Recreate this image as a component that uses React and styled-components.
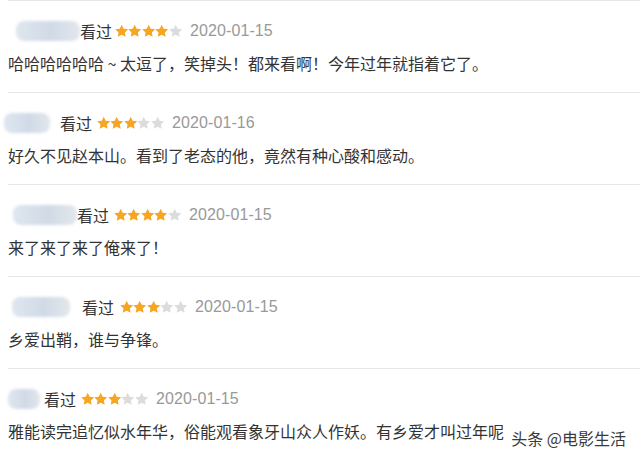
import React from 'react';
import styled, { createGlobalStyle } from 'styled-components';

const GlobalStyle = createGlobalStyle`
  html, body {
    margin: 0;
    padding: 0;
    background: #fff;
  }
  body {
    width: 640px;
    height: 453px;
    overflow: hidden;
    font-family: "Liberation Sans", "Noto Sans CJK SC", sans-serif;
  }
`;

const List = styled.div`
  position: relative;
  padding-left: 8px;
`;

const Item = styled.div`
  height: 92px;
  box-sizing: border-box;
  border-top: 1px solid #e6e6e6;
  padding-top: 18px;
`;

const Header = styled.div`
  display: flex;
  align-items: center;
  height: 24px;
  font-size: 16px;
  color: #333;
`;

const Name = styled.span`
  position: relative;
  display: inline-block;
  width: ${p => p.$w}px;
  height: 24px;
  margin-right: ${p => p.$gap}px;
`;

const Blob = styled.span`
  position: absolute;
  left: ${p => p.$x}px;
  top: 2px;
  width: ${p => p.$w}px;
  height: 20px;
  border-radius: 8px;
  background: linear-gradient(90deg, #dfe6ef 0%, #d0dae6 55%, #e3e7ec 100%);
  filter: blur(1.5px);
`;

const Watched = styled.span`
  font-family: "Noto Sans CJK SC", sans-serif;
  line-height: 24px;
  color: #333;
`;

const Stars = styled.span`
  display: inline-flex;
  margin-left: ${p => p.$gap}px;
`;

const DateText = styled.span`
  margin-left: 8px;
  color: #999;
  font-size: 16px;
  letter-spacing: 0.1px;
`;

const Comment = styled.div`
  margin-top: 8px;
  font-family: "Noto Sans CJK SC", sans-serif;
  font-size: 16px;
  line-height: 24px;
  color: #333;
  white-space: nowrap;
`;

const Mark = styled.span`
  position: absolute;
  right: 14px;
  bottom: 11px;
  font-family: "Noto Sans CJK SC", sans-serif;
  font-size: 16px;
  line-height: 22px;
  color: #3a3a3a;
  text-shadow: 0 0 2px #fff, 0 0 2px #fff, 0 0 3px #fff;
`;

const Star = ({ on }) => (
  <svg width="13.4" height="14" viewBox="0 0 24 24">
    <path
      d="M12 .6l3.5 7.3 8 1.1-5.8 5.6 1.4 7.9L12 18.7l-7.1 3.8 1.4-7.9L.5 9l8-1.1z"
      fill={on ? '#f6a623' : '#dcdcdc'}
    />
  </svg>
);

const reviews = [
  { nameW: 72, blobX: 8, blobW: 64, gap: 0, starGap: 3, stars: 4, date: '2020-01-15',
    text: '哈哈哈哈哈哈 ~ 太逗了，笑掉头！都来看啊！今年过年就指着它了。' },
  { nameW: 48, blobX: -4, blobW: 46, gap: 4, starGap: 5, stars: 3, date: '2020-01-16',
    text: '好久不见赵本山。看到了老态的他，竟然有种心酸和感动。' },
  { nameW: 69, blobX: 5, blobW: 64, gap: 0, starGap: 5, stars: 4, date: '2020-01-15',
    text: '来了来了来了俺来了！' },
  { nameW: 70, blobX: 4, blobW: 58, gap: 4, starGap: 6, stars: 3, date: '2020-01-15',
    text: '乡爱出鞘，谁与争锋。' },
  { nameW: 32, blobX: 0, blobW: 32, gap: 4, starGap: 5, stars: 3, date: '2020-01-15',
    text: '雅能读完追忆似水年华，俗能观看象牙山众人作妖。有乡爱才叫过年呢' },
];

export default function App() {
  return (
    <>
      <GlobalStyle />
      <List>
        {reviews.map((r, i) => (
          <Item key={i}>
            <Header>
              <Name $w={r.nameW} $gap={r.gap}>
                <Blob $x={r.blobX} $w={r.blobW} />
              </Name>
              <Watched>看过</Watched>
              <Stars $gap={r.starGap}>
                {[0, 1, 2, 3, 4].map(n => (
                  <Star key={n} on={n < r.stars} />
                ))}
              </Stars>
              <DateText>{r.date}</DateText>
            </Header>
            <Comment>{r.text}</Comment>
          </Item>
        ))}
        <Mark>头条 @电影生活</Mark>
      </List>
    </>
  );
}
